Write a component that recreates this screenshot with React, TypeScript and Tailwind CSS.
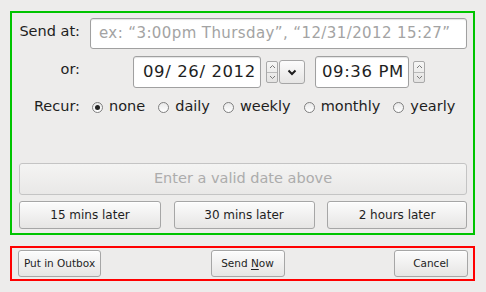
import React from "react";

const font = { fontFamily: '"DejaVu Sans", "Liberation Sans", sans-serif' };

function Spinner() {
  return (
    <div className="flex h-[22px] w-[12px] flex-col overflow-hidden rounded-[2px] border border-[#a9a9a9] bg-gradient-to-b from-[#f6f6f5] to-[#e4e3e2]">
      <div className="flex flex-1 items-center justify-center border-b border-[#b9b9b9]">
        <svg width="7" height="5" viewBox="0 0 7 5">
          <path d="M1 4 L3.5 1.5 L6 4" fill="none" stroke="#7a7a7a" strokeWidth="1" />
        </svg>
      </div>
      <div className="flex flex-1 items-center justify-center">
        <svg width="7" height="5" viewBox="0 0 7 5">
          <path d="M1 1 L3.5 3.5 L6 1" fill="none" stroke="#7a7a7a" strokeWidth="1" />
        </svg>
      </div>
    </div>
  );
}

function Radio({ label, checked }: { label: string; checked?: boolean }) {
  return (
    <div className="flex items-center">
      <div className="flex h-[11px] w-[11px] items-center justify-center rounded-full border border-[#7f7f7f] bg-gradient-to-b from-[#e9e9e9] to-white">
        {checked && <div className="h-[5px] w-[5px] rounded-full bg-[#222]" />}
      </div>
      <span className="ml-[6px]">{label}</span>
    </div>
  );
}

function Btn({ children, className = "" }: { children: React.ReactNode; className?: string }) {
  return (
    <div
      className={
        "flex items-center justify-center whitespace-nowrap rounded-[3px] border border-[#a6a6a6] bg-gradient-to-b from-[#fcfcfc] to-[#e6e5e4] text-[#1e1e1e] shadow-[inset_0_1px_0_#ffffff] " +
        className
      }
    >
      {children}
    </div>
  );
}

export default function App() {
  return (
    <div className="h-[292px] w-[486px] overflow-hidden bg-[#edeceb] pt-[11px] pl-[10px] text-[#1e1e1e]" style={font}>
      <div className="flex h-[224px] w-[465px] flex-col border-2 border-[#00c400] pt-[5px] pb-[4px] text-[14.5px]">
        <div className="flex h-[31px] items-start">
          <div className="w-[68px] pt-[3px] text-right">Send at:</div>
          <div className="ml-[10px] flex h-[31px] w-[377px] items-center whitespace-nowrap rounded-[3px] border border-[#a0a0a0] bg-white pl-[8px] text-[15px] tracking-[0.4px] text-[#a3a3a3] shadow-[inset_0_1px_1px_#e4e4e4]">
            ex: “3:00pm Thursday”, “12/31/2012 15:27”
          </div>
        </div>
        <div className="mt-[7px] flex h-[32px] items-center">
          <div className="w-[68px] self-start pt-[3px] text-right">or:</div>
          <div className="ml-[53px] flex h-[32px] w-[128px] items-center rounded-[3px] border border-[#a0a0a0] bg-white pl-[9px] text-[16.5px] tracking-[0.6px] shadow-[inset_0_1px_1px_#e4e4e4]">
            09/ 26/ 2012
          </div>
          <div className="ml-[5px]">
            <Spinner />
          </div>
          <div className="ml-[1px] flex h-[24px] w-[26px] items-center justify-center rounded-[3px] border border-[#a6a6a6] bg-gradient-to-b from-[#fcfcfc] to-[#e6e5e4]">
            <svg width="10" height="7" viewBox="0 0 10 7">
              <path d="M1.5 1.5 L5 5 L8.5 1.5" fill="none" stroke="#1e1e1e" strokeWidth="2" />
            </svg>
          </div>
          <div className="ml-[10px] flex h-[32px] w-[94px] items-center rounded-[3px] border border-[#a0a0a0] bg-white pl-[6px] text-[16.5px] tracking-[0.6px] shadow-[inset_0_1px_1px_#e4e4e4]">
            09:36 PM
          </div>
          <div className="ml-[4px]">
            <Spinner />
          </div>
        </div>
        <div className="mt-[8px] flex h-[22px] items-center">
          <div className="w-[68px] text-right">Recur:</div>
          <div className="ml-[12px] flex items-center gap-[13px]">
            <Radio label="none" checked />
            <Radio label="daily" />
            <Radio label="weekly" />
            <Radio label="monthly" />
            <Radio label="yearly" />
          </div>
        </div>
        <div className="flex-1" />
        <div className="ml-[7px] flex h-[32px] w-[448px] items-center justify-center rounded-[3px] border border-[#c4c4c4] bg-gradient-to-b from-[#f4f4f3] to-[#e9e8e7] text-[14.5px] text-[#acacac]">
          Enter a valid date above
        </div>
        <div className="mt-[6px] ml-[7px] flex h-[28px] w-[448px] justify-between">
          <Btn className="w-[142px] text-[12px]">15 mins later</Btn>
          <Btn className="w-[141px] text-[12px]">30 mins later</Btn>
          <Btn className="w-[140px] text-[12px]">2 hours later</Btn>
        </div>
      </div>
      <div className="mt-[11px] flex h-[35px] w-[465px] items-start justify-between border-2 border-[#ff0000] pt-[2px] pl-[6px] pr-[5px]">
        <Btn className="h-[27px] w-[83px] text-[10.5px]">Put in Outbox</Btn>
        <Btn className="h-[27px] w-[74px] text-[10.5px]">
          <span>
            Send <span className="underline underline-offset-2">N</span>ow
          </span>
        </Btn>
        <Btn className="h-[27px] w-[74px] text-[10.5px]">Cancel</Btn>
      </div>
    </div>
  );
}
